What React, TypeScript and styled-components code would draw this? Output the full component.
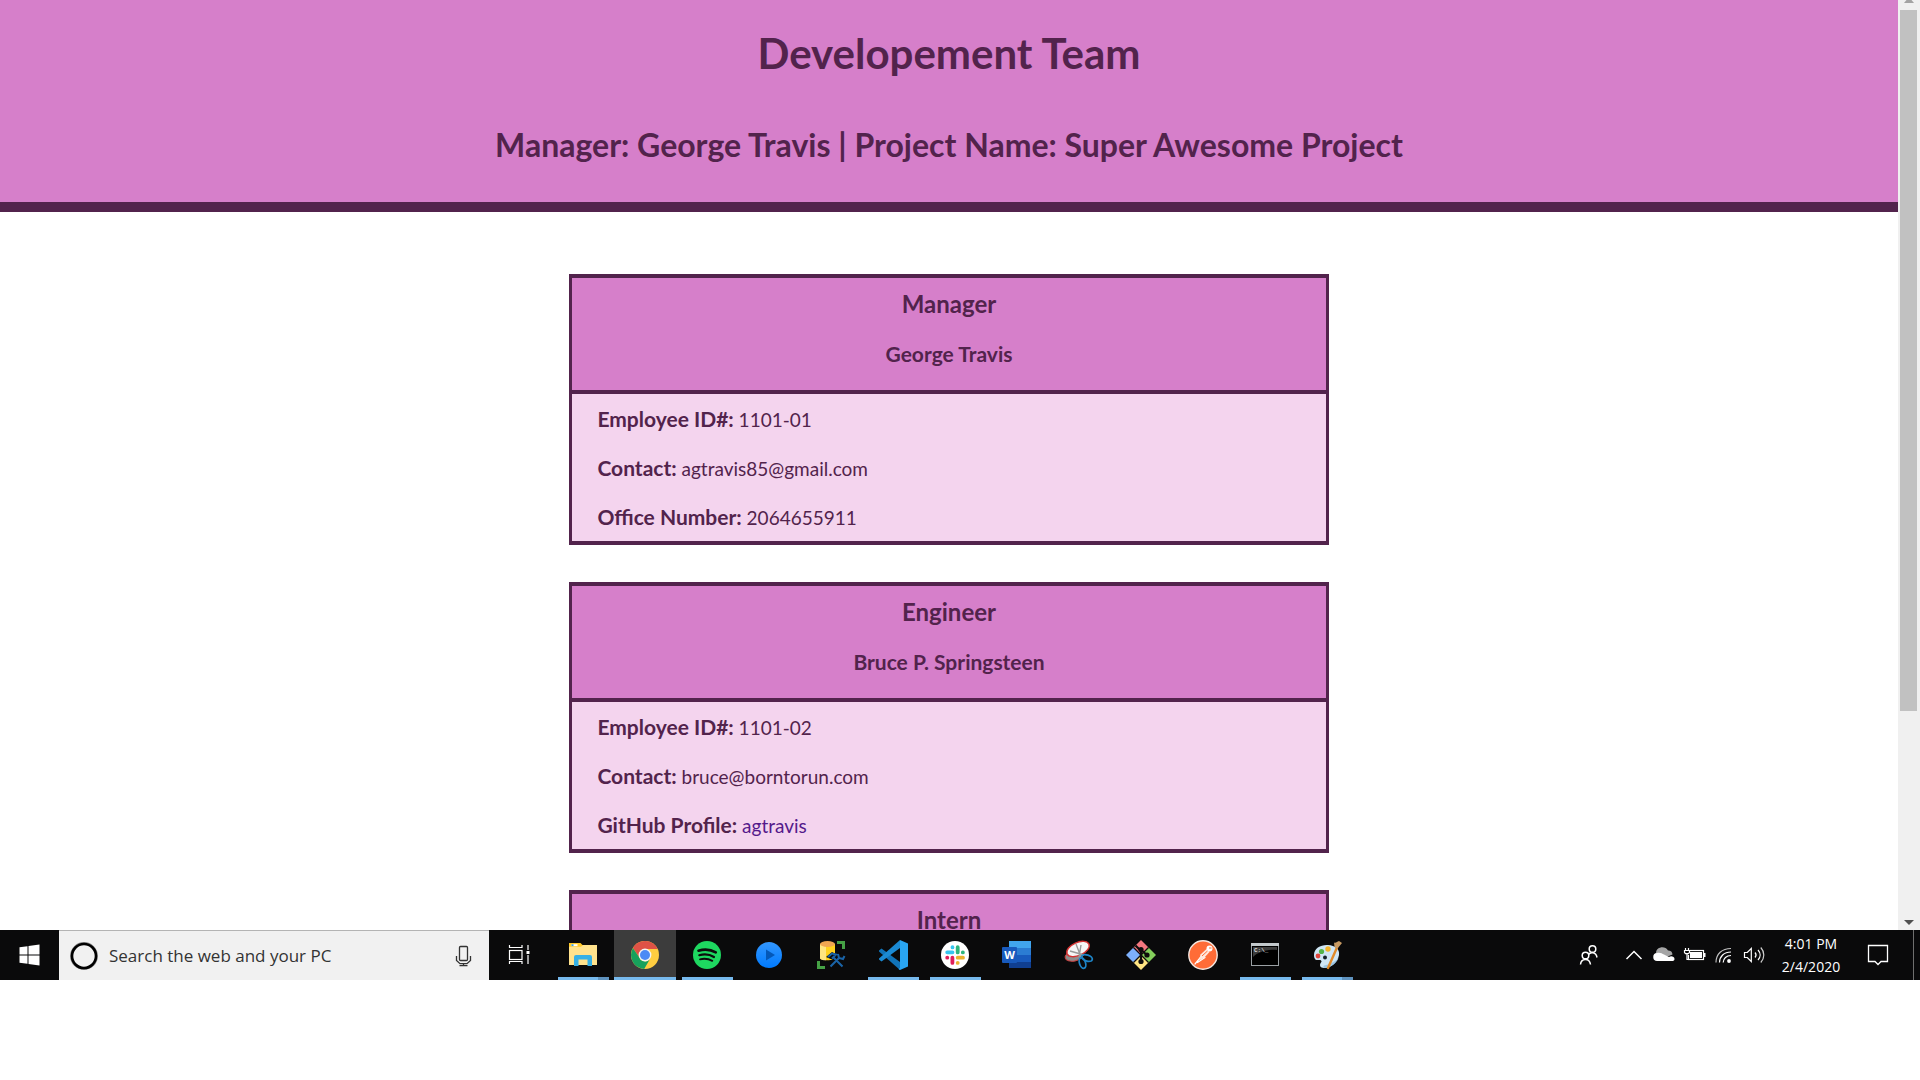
import React from "react";
import styled, { createGlobalStyle, css } from "styled-components";

const plum = "#52234c";
const orchid = "#d67fca";
const blush = "#f4d4ee";

const GlobalStyle = createGlobalStyle`
  *, *::before, *::after { box-sizing: border-box; }
  body { margin: 0; background: #fff; }
  h1, h2, h3, h4, p { margin: 0; }
  button { border: 0; padding: 0; background: none; color: inherit; font: inherit; }
`;

const Screen = styled.div`
  display: grid;
  grid-template-rows: minmax(0, 1fr) 50px;
  height: 100vh;
  padding-bottom: 100px;
  overflow: hidden;
`;

/* ---------- browser window ---------- */

const Browser = styled.div`
  display: flex;
  min-height: 0;
  overflow: hidden;
`;

const Page = styled.div`
  flex: 1;
  min-width: 0;
  overflow: hidden;
  color: ${plum};
  font-family: Lato, "Gill Sans", sans-serif;
`;

const Banner = styled.header`
  display: flex;
  flex-direction: column;
  align-items: center;
  gap: 50px;
  padding: 29px 20px 39px;
  background: ${orchid};
  border-bottom: 10px solid ${plum};
  text-align: center;
`;

const Title = styled.h1`
  font-size: 42px;
  line-height: 48px;
  font-weight: 700;
`;

const Subtitle = styled.h2`
  font-size: 32px;
  line-height: 36px;
  font-weight: 700;
`;

const Cards = styled.main`
  display: flex;
  flex-direction: column;
  align-items: center;
  gap: 37px;
  padding: 62px 0;
`;

const Card = styled.article`
  width: 40%;
  border: solid ${plum};
  border-width: 4px 3px;
  background: ${blush};
`;

const CardHead = styled.div`
  display: flex;
  flex-direction: column;
  gap: 24px;
  padding: 12px 20px 24px;
  background: ${orchid};
  border-bottom: 4px solid ${plum};
  text-align: center;
`;

const Role = styled.h3`
  font-size: 24px;
  line-height: 28px;
  font-weight: 700;
`;

const Name = styled.h4`
  font-size: 21px;
  line-height: 24px;
  font-weight: 700;
`;

const Fact = styled.p`
  height: 49px;
  padding-left: 25px;
  font-size: 19px;
  line-height: 50px;
`;

const FactLabel = styled.b`
  font-size: 21px;
`;

const ProfileLink = styled.a`
  color: #551a8b;
  text-decoration: none;
`;

const ScrollTrack = styled.div`
  display: flex;
  flex-direction: column;
  width: 22px;
  padding: 0 3px 0 2px;
  background: #f0f0f0;
`;

const ScrollArrow = styled.button`
  display: flex;
  justify-content: center;
  height: 10px;
`;

const ScrollLane = styled.div`
  flex: 1;
`;

const ScrollThumb = styled.div`
  height: 77%;
  background: #c1c1c1;
`;

/* ---------- taskbar ---------- */

const Taskbar = styled.footer`
  display: flex;
  background: #0a0a0b;
  color: #fff;
  font-family: "Open Sans", "Segoe UI", sans-serif;
`;

const StartButton = styled.button`
  display: grid;
  place-items: center;
  width: 59px;
`;

const SearchBox = styled.label`
  display: flex;
  align-items: center;
  width: 430px;
  padding: 0 10px;
  gap: 10px;
  background: #f1f1f1;
  border-top: 1px solid #b4b4b4;
`;

const SearchInput = styled.input`
  flex: 1;
  min-width: 0;
  border: 0;
  padding: 0;
  outline: 0;
  background: none;
  font-family: inherit;
  font-size: 17px;
  line-height: 24px;
  color: #333;
  &::placeholder { color: #333; opacity: 1; }
`;

const MicButton = styled.button`
  display: grid;
  place-items: center;
  width: 30px;
  height: 30px;
`;

const AppButton = styled.button<{ $active?: boolean; $wide?: boolean }>`
  display: grid;
  grid-template-rows: 1fr 3px;
  place-items: center;
  width: ${(p) => (p.$wide ? 63 : 62)}px;
  padding-top: 3px;
  ${(p) => p.$active && css`background: #3c3c3c;`}
`;

const RunningMark = styled.span<{ $full?: boolean; $stacked?: boolean }>`
  width: ${(p) => (p.$full ? "100%" : "51px")};
  height: 3px;
  background: ${(p) =>
    p.$stacked ? "linear-gradient(to right, #76b9ed 40px, #5f93bf 40px)" : "#76b9ed"};
`;

const Tray = styled.div`
  display: flex;
  margin-left: auto;
`;

const TrayButton = styled.button<{ $width?: number }>`
  display: grid;
  place-items: center;
  width: ${(p) => p.$width ?? 30}px;
`;

const Clock = styled.button`
  width: 84px;
  font-size: 14px;
  line-height: 23px;
  text-align: center;
`;

const ClockLine = styled.span`
  display: block;
`;

const ShowDesktop = styled.button`
  width: 7px;
  margin-left: 10px;
  border-left: 1px solid #6f6f6f;
`;

/* ---------- icons, drawn on a 30 x 30 grid ---------- */

const Icon = ({ children }: { children: React.ReactNode }) => (
  <svg width="30" height="30" viewBox="0 0 30 30" fill="none" aria-hidden="true">
    {children}
  </svg>
);

const WindowsIcon = () => (
  <Icon>
    <path fill="#fff" d="M4.500 7.300 12.500 6.200V14.500H4.500zM13.500 6.100 24.500 4.500V14.500H13.500zM4.500 15.500H12.500V23.800L4.500 22.700zM13.500 15.500H24.500V25.500L13.500 23.900z" />
  </Icon>
);

const CortanaIcon = () => (
  <Icon>
    <circle cx="15" cy="15" r="13" stroke="#666" strokeWidth="1.800" opacity=".8" />
    <circle cx="15" cy="15" r="12" stroke="#000" strokeWidth="2.600" />
  </Icon>
);

const MicIcon = () => (
  <Icon>
    <g stroke="#333" strokeWidth="1.300">
      <rect x="10.500" y="5.500" width="8" height="14" rx="1" />
      <path d="M7.500 15v4.500l3.500 3.200h7l3.500-3.200V15M14.500 22.700v2M10.500 24.700h8" />
    </g>
  </Icon>
);

const TaskViewIcon = () => (
  <Icon>
    <g stroke="#fff" strokeWidth="1.200">
      <rect x="3.500" y="10.500" width="12.500" height="9" />
      <path d="M3.500 5v2.500H16V5M3.500 24v-2.500H16V24M22 5v5M22 15v9" />
    </g>
    <path fill="#fff" d="M20.500 11h3v3h-3z" />
  </Icon>
);

const ExplorerIcon = () => (
  <Icon>
    <path fill="#ffc928" d="M1 3h11.500l2 2H29v3H1z" />
    <path fill="#fff" d="M3.500 4.200h6v2h-6z" />
    <path fill="#3aa3e3" d="M3.500 4.200h2v2h-2z" />
    <path fill="#ffe28d" d="M1 6.800h12L15 5h14v20H1z" />
    <path fill="#35b0e6" d="M6 17a2 2 0 0 1 2-2h14a2 2 0 0 1 2 2v9h-4.500v-6.500h-9V26H6z" />
  </Icon>
);

const ChromeIcon = () => (
  <Icon>
    <circle cx="15" cy="15" r="14" fill="#ffcd40" />
    <path fill="#de5246" d="M2.900 8A14 14 0 0 1 27.600 9H15a6 6 0 0 0-5.600 8.500z" />
    <path fill="#17a15c" d="M2.900 8A14 14 0 0 0 14.200 29l5.900-10.300A6 6 0 0 1 9.700 18z" />
    <circle cx="15" cy="15" r="6.400" fill="#f4f4f4" />
    <circle cx="15" cy="15" r="5" fill="#4c8bf5" />
  </Icon>
);

const SpotifyIcon = () => (
  <Icon>
    <circle cx="15" cy="15" r="14" fill="#1ed760" />
    <g stroke="#0c0c0c" strokeLinecap="round">
      <path strokeWidth="2.600" d="M6.500 10.700c5.500-1.700 12.500-1.100 17.300 1.700" />
      <path strokeWidth="2.200" d="M7.300 15.200c5-1.400 10.500-.8 14.700 1.800" />
      <path strokeWidth="1.800" d="M8 19.300c4.300-1.100 8.500-.6 12.300 1.600" />
    </g>
  </Icon>
);

const PlayIcon = () => (
  <Icon>
    <defs>
      <linearGradient id="play-blue" x2="0" y2="1">
        <stop stopColor="#3397ff" />
        <stop offset="1" stopColor="#007bff" />
      </linearGradient>
    </defs>
    <circle cx="15" cy="15" r="13" fill="url(#play-blue)" />
    <path fill="#0458b8" d="M12 9.500 21 15l-9 5.500z" />
  </Icon>
);

const DatabaseIcon = () => (
  <Icon>
    <path fill="#ffd21e" d="M4 4v14c0 3 15 3 15 0V4z" />
    <path fill="#ffe680" d="M4 4v14c0 1.500 3 2.300 6 2.300V4z" />
    <ellipse cx="11.500" cy="4" rx="7.500" ry="3" fill="#f0a652" />
    <path stroke="#45a145" strokeWidth="3" d="M21 2.500h6.500V9M2.500 21v6.500H9" />
    <path fill="#0a0a0b" d="m10 17 6-5 6 3 4-3 4 5-4 4 3 5-3 3-5-4-5 4-3-3 4-6z" />
    <path stroke="#1a64a8" strokeWidth="2" d="m14.500 26.500 9-9M17 17l9.500 9.500M12 17l4-3.500 4 1-4 4M22 14l1 4 4 1 1.500-3" />
  </Icon>
);

const CodeIcon = () => (
  <Icon>
    <path fill="#1173b8" d="M1 10.500 3.500 8.500 22 22v8L1 11.500z" />
    <path fill="#1b8ad3" d="M1 19.500 3.500 21.500 22 8V0L1 18.500z" />
    <path fill="#29a5f2" d="M22 0l8 3.500v23L22 30l-1.500-1 1.500-1V2z" />
    <path fill="#0a0a0b" d="M22 9v12l-8-6z" />
  </Icon>
);

const SlackIcon = () => (
  <Icon>
    <circle cx="15" cy="15" r="14" fill="#fff" />
    <g strokeWidth="3.800" strokeLinecap="round">
      <path stroke="#36c5f0" d="M7.200 12.300h5.300M12.500 7.200v.2" />
      <path stroke="#2eb67d" d="M17.700 7.200v5.200M22.800 12.400h.1" />
      <path stroke="#ecb22e" d="M17.700 17.700H23M17.700 22.800v.1" />
      <path stroke="#e01e5a" d="M12.400 17.700v5.200M7.200 17.700h.1" />
    </g>
  </Icon>
);

const WordLetter = styled.text`
  font: 700 11px "Open Sans", sans-serif;
  fill: #fff;
`;

const WordIcon = () => (
  <Icon>
    <path fill="#41a5ee" d="M7 1h22v7H7z" />
    <path fill="#2b7cd3" d="M7 8h22v7H7z" />
    <path fill="#185abd" d="M7 15h22v7H7z" />
    <path fill="#103f91" d="M7 22h22v6H7z" />
    <rect x="0" y="7" width="15" height="16" rx="1" fill="#185abd" />
    <WordLetter x="7.500" y="19" textAnchor="middle">W</WordLetter>
  </Icon>
);

const SnipIcon = () => (
  <Icon>
    <ellipse cx="10" cy="16" rx="9" ry="5" fill="#8d8d8d" stroke="#c44" transform="rotate(-12 10 16)" />
    <ellipse cx="14" cy="9" rx="12" ry="6.500" fill="#f6f6f6" stroke="#d43131" strokeWidth="1.400" transform="rotate(-24 14 9)" />
    <path stroke="#999" strokeWidth="1.400" d="m12 4 5 13M6 11l14 4M17 5l-2 12" />
    <g stroke="#1d84c7" strokeWidth="1.800">
      <ellipse cx="23" cy="18" rx="5.500" ry="3" transform="rotate(18 23 18)" />
      <ellipse cx="18.500" cy="23" rx="3" ry="5.500" transform="rotate(-18 18.500 23)" />
    </g>
  </Icon>
);

const GitIcon = () => (
  <Icon>
    <path fill="#f4777f" d="M15 0l7.500 7.500L15 15 7.500 7.500z" />
    <path fill="#7db0fb" d="M7.500 7.500 15 15l-7.500 7.500L0 15z" />
    <path fill="#84cf5b" d="M22.500 7.500 30 15l-7.500 7.500L15 15z" />
    <path fill="#ffe583" d="M15 15l7.500 7.500L15 30l-7.500-7.500z" />
    <path stroke="#0f0d0d" strokeWidth="1.300" d="m7.500 7.500 15 15M22.500 7.500l-15 15" />
    <path stroke="#0f0d0d" strokeWidth="2.200" d="M9.500 5.500 15 11v11M15 10l6 5" />
    <g fill="#0f0d0d">
      <circle cx="15" cy="9.500" r="2.600" />
      <circle cx="21" cy="15" r="2.600" />
      <circle cx="15" cy="21.500" r="2.600" />
    </g>
  </Icon>
);

const PostmanIcon = () => (
  <Icon>
    <circle cx="15" cy="15" r="14.200" fill="#ff6c37" stroke="#f5e8e2" strokeWidth="1.400" />
    <path stroke="#fff" strokeWidth="1.200" strokeLinecap="round" d="M7 24l7-8.500M9.500 22.500l7.500-5" />
    <path fill="#ffe8dd" d="m12.500 14.500 6-5.500 3 3-5.500 6-5 2.500z" />
    <circle cx="21.500" cy="8.500" r="3" fill="#fff" />
    <path stroke="#ff6c37" strokeWidth="1" d="m14 16 5.500-5M21 8h2.500" />
  </Icon>
);

const ConsoleText = styled.text`
  font: 700 6px "Liberation Mono", monospace;
  fill: #ddd;
`;

const ConsoleIcon = () => (
  <Icon>
    <rect x="1.500" y="3.500" width="27" height="22" fill="#000" stroke="#9aa0a4" />
    <path fill="#c3c9cc" d="M1 3h28v3H1z" />
    <path fill="#3c3c3c" d="M3 7h24v3C17 9 8 12 3 17z" />
    <ConsoleText x="4" y="11.500">C:\_</ConsoleText>
  </Icon>
);

const PaintIcon = () => (
  <Icon>
    <path fill="#cfe6f5" d="M2 15C2 8 9 4.500 16 5c7 .5 12 4 11 10-1 7-8 13-15 13-4 0-5-3-3-5.500 1.500-2-.5-2.800-3-2.500-3 .4-4-2-4-5z" />
    <path fill="#9cc6e4" d="M12 28c6 0 12-4 14.500-10-1 1-6 6-12.500 7-3 .4-3 2-2 3z" />
    <circle cx="6" cy="16" r="2.400" fill="#e0463c" />
    <circle cx="9.500" cy="11.500" r="2.600" fill="#53b54a" />
    <circle cx="16" cy="9" r="2.700" fill="#f5b52c" />
    <circle cx="13" cy="17.500" r="2" fill="#14202a" />
    <path stroke="#e08a2a" strokeWidth="2.400" strokeLinecap="round" d="M25 7.500 16 28" />
    <path fill="#c79a63" d="M22 2.500c2 1 3-1 5-1.500l3 2-4.500 5.500-3-1.500z" />
  </Icon>
);

const PeopleIcon = () => (
  <Icon>
    <g stroke="#fff" strokeWidth="1.500">
      <circle cx="18.500" cy="9" r="3.300" />
      <path d="M14.500 14.500c2-3 7.500-2.500 8.500 3" />
      <circle cx="11.500" cy="15.500" r="3.300" />
      <path d="M6.500 24.500c.5-6.500 9-7 10 0" />
    </g>
  </Icon>
);

const CaretIcon = () => (
  <Icon>
    <path stroke="#fff" strokeWidth="1.500" d="m7.500 19 7.500-7.500 7.500 7.500" />
  </Icon>
);

const CloudIcon = () => (
  <Icon>
    <path fill="#a5a5a5" d="M7 13c0-6 9-8 12-2.500 3-.5 4.500 2 4.500 4L15 18z" />
    <path fill="#fff" d="M8.500 21a4 4 0 0 1-.5-8c3-.8 5 .5 7 1.500l5 2.500c2-1.500 5.500-.5 5.500 2 0 1.500-1 2-2.500 2z" />
  </Icon>
);

const BatteryIcon = () => (
  <Icon>
    <rect x="9.500" y="10.500" width="15" height="9" stroke="#fff" strokeWidth="1.200" />
    <path fill="#fff" d="M11 12h12v6H11zM25 13h1.500v4H25z" />
    <path fill="#0a0a0b" d="M5 7h6v8H5z" />
    <path stroke="#fff" strokeWidth="1.200" d="M6.500 8v2.500M9.500 8v2.500M5.500 10.500h5v2l-1 1.200h-3l-1-1.200zM8 14v5.500h2" />
  </Icon>
);

const WifiIcon = () => (
  <Icon>
    <g stroke="#fff" strokeWidth="1.200">
      <path opacity=".75" d="M7 22.500C7 14 13 8.500 22 8.500" />
      <path d="M10.500 22.500c0-6 4.500-10.500 11.500-10.500M14.200 22.500c0-4 3.300-7 7.800-7" />
    </g>
    <circle cx="20" cy="21" r="1.900" fill="#fff" />
  </Icon>
);

const VolumeIcon = () => (
  <Icon>
    <g stroke="#fff" strokeWidth="1.200">
      <path d="M5.500 12.500h2.800l4-4v13l-4-4H5.500z" />
      <path d="M16 12.500c1.300 1.500 1.300 3.500 0 5M19 10c2.800 3 2.800 7 0 10" />
      <path opacity=".8" d="M21.800 7.500c4 4.500 4 10.500 0 15" />
    </g>
  </Icon>
);

const NotificationIcon = () => (
  <Icon>
    <path stroke="#fff" strokeWidth="1.300" d="M5.500 5.500h19v16H18L15 24.500 12 21.500H5.500z" />
  </Icon>
);

/* ---------- data ---------- */

type Member = {
  role: string;
  name: string;
  id: string;
  contact: string;
  extraLabel: string;
  extra: React.ReactNode;
};

const team: Member[] = [
  {
    role: "Manager",
    name: "George Travis",
    id: "1101-01",
    contact: "agtravis85@gmail.com",
    extraLabel: "Office Number:",
    extra: "2064655911",
  },
  {
    role: "Engineer",
    name: "Bruce P. Springsteen",
    id: "1101-02",
    contact: "bruce@borntorun.com",
    extraLabel: "GitHub Profile:",
    extra: <ProfileLink href="#agtravis">agtravis</ProfileLink>,
  },
];

type TaskbarApp = {
  label: string;
  icon: React.ReactNode;
  running?: boolean;
  active?: boolean;
  stacked?: boolean;
};

const apps: TaskbarApp[] = [
  { label: "File Explorer", icon: <ExplorerIcon />, running: true, stacked: true },
  { label: "Chrome", icon: <ChromeIcon />, running: true, active: true },
  { label: "Spotify", icon: <SpotifyIcon />, running: true },
  { label: "Player", icon: <PlayIcon /> },
  { label: "Database tools", icon: <DatabaseIcon /> },
  { label: "Code", icon: <CodeIcon />, running: true },
  { label: "Slack", icon: <SlackIcon />, running: true },
  { label: "Word", icon: <WordIcon /> },
  { label: "Snipping Tool", icon: <SnipIcon /> },
  { label: "Git", icon: <GitIcon /> },
  { label: "Postman", icon: <PostmanIcon /> },
  { label: "Command Prompt", icon: <ConsoleIcon />, running: true },
  { label: "Paint", icon: <PaintIcon />, running: true, stacked: true },
];

export default function App() {
  return (
    <>
      <GlobalStyle />
      <Screen>
        <Browser>
          <Page>
            <Banner>
              <Title>Developement Team</Title>
              <Subtitle>Manager: George Travis | Project Name: Super Awesome Project</Subtitle>
            </Banner>
            <Cards>
              {team.map((m) => (
                <Card key={m.role}>
                  <CardHead>
                    <Role>{m.role}</Role>
                    <Name>{m.name}</Name>
                  </CardHead>
                  <Fact><FactLabel>Employee ID#:</FactLabel> {m.id}</Fact>
                  <Fact><FactLabel>Contact:</FactLabel> {m.contact}</Fact>
                  <Fact><FactLabel>{m.extraLabel}</FactLabel> {m.extra}</Fact>
                </Card>
              ))}
              <Card>
                <CardHead>
                  <Role>Intern</Role>
                </CardHead>
              </Card>
            </Cards>
          </Page>
          <ScrollTrack>
            <ScrollArrow aria-label="Scroll up">
              <svg width="10" height="3" viewBox="0 0 10 3" aria-hidden="true">
                <path fill="#a3a3a3" d="M2.500 0h5L10 3H0z" />
              </svg>
            </ScrollArrow>
            <ScrollLane>
              <ScrollThumb />
            </ScrollLane>
            <ScrollArrow aria-label="Scroll down">
              <svg width="10" height="5" viewBox="0 0 10 5" aria-hidden="true">
                <path fill="#505050" d="M0 0h10L5 5z" />
              </svg>
            </ScrollArrow>
          </ScrollTrack>
        </Browser>
        <Taskbar>
          <StartButton aria-label="Start"><WindowsIcon /></StartButton>
          <SearchBox>
            <CortanaIcon />
            <SearchInput type="text" aria-label="Search" placeholder="Search the web and your PC" />
            <MicButton aria-label="Voice search"><MicIcon /></MicButton>
          </SearchBox>
          <AppButton $wide aria-label="Task view"><TaskViewIcon /></AppButton>
          {apps.map((a) => (
            <AppButton key={a.label} aria-label={a.label} $active={a.active}>
              {a.icon}
              {a.running && <RunningMark $full={a.active} $stacked={a.stacked} />}
            </AppButton>
          ))}
          <Tray>
            <TrayButton $width={60} aria-label="People"><PeopleIcon /></TrayButton>
            <TrayButton aria-label="Hidden icons"><CaretIcon /></TrayButton>
            <TrayButton aria-label="Cloud storage"><CloudIcon /></TrayButton>
            <TrayButton aria-label="Battery"><BatteryIcon /></TrayButton>
            <TrayButton aria-label="Network"><WifiIcon /></TrayButton>
            <TrayButton aria-label="Volume"><VolumeIcon /></TrayButton>
            <Clock>
              <ClockLine>4:01 PM</ClockLine>
              <ClockLine>2/4/2020</ClockLine>
            </Clock>
            <TrayButton $width={50} aria-label="Notifications"><NotificationIcon /></TrayButton>
            <ShowDesktop aria-label="Show desktop" />
          </Tray>
        </Taskbar>
      </Screen>
    </>
  );
}
